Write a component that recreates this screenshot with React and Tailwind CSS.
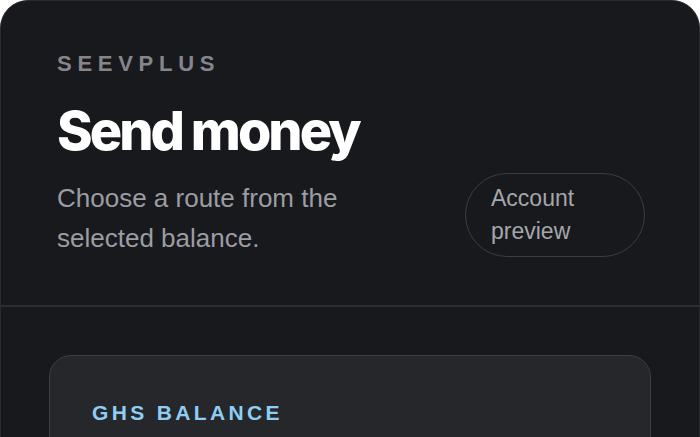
import React from 'react';

function App() {
  return (
    <div className="h-screen overflow-hidden bg-white">
      <div className="min-h-full rounded-t-[28px] border border-[#2a2b30] bg-[#18191d]">
        {/* Header */}
        <div className="border-b-2 border-[#2c2d31] px-14 pt-[49px] pb-[47px]">
          <p className="font-['Liberation_Sans',Arial,sans-serif] text-[22px] leading-[28px] font-bold uppercase tracking-[0.26em] text-[#85868b]">
            Seevplus
          </p>
          <h1 className="mt-[25px] font-['Inter',sans-serif] text-[54px] leading-[56px] font-extrabold tracking-[-0.055em] text-white">
            Send money
          </h1>
          <div className="mt-[13px] flex items-start justify-between">
            <p className="mt-[6px] w-[300px] font-['Liberation_Sans',Arial,sans-serif] text-[26px] leading-[40px] text-[#9c9da2]">
              Choose a route from the selected balance.
            </p>
            <button className="mt-[1px] mr-[-2px] w-[180px] rounded-full border border-[#3c3d42] px-[25px] py-2 text-left font-['Liberation_Sans',Arial,sans-serif] text-[23px] leading-[33px] text-[#a5a6ab]">
              Account preview
            </button>
          </div>
        </div>

        {/* Balance card */}
        <div className="px-12 pt-[48px]">
          <div className="h-[200px] rounded-[22px] border border-[#3d3e43] bg-[#26272b] px-[42px] pt-[45px]">
            <p className="font-['Liberation_Sans',Arial,sans-serif] text-[21px] leading-[24px] font-bold uppercase tracking-[0.16em] text-[#8fcdf5]">
              GHS Balance
            </p>
          </div>
        </div>
      </div>
    </div>
  );
}

export default App;
